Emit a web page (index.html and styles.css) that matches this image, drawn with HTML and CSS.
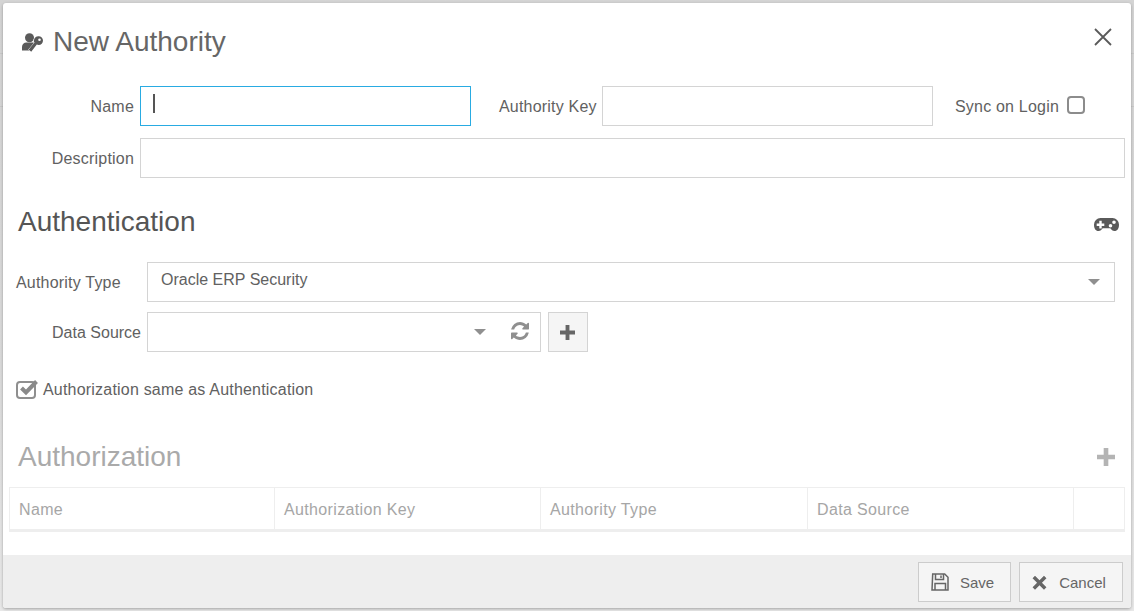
FILE: index.html
```html
<!DOCTYPE html>
<html lang="en">
<head>
    <meta charset="UTF-8">
    <meta name="viewport" content="width=device-width, initial-scale=1.0">
    <title>New Authority</title>
    <link rel="stylesheet" href="styles.css">
</head>
<body>

    <div class="modal">
        <!-- Header -->
        <div class="modal-header">
            <h1>
                <svg class="title-icon" viewBox="0 0 21 19" aria-hidden="true">
                    <circle cx="7.500" cy="4.800" r="4.500"/>
                    <path d="M0 17.500v-3.500c0-3 2-4.500 4.500-4.500h6.500l3 1-6 7z"/>
                    <path class="key" fill-rule="evenodd" d="M16.700 3.300a4.300 4.300 0 0 1 0 8.600c-.7 0-1.300-.1-1.900-.4L9.200 18.700 6.700 16.500l5.800-6.700a4.300 4.300 0 0 1 4.200-6.500zm.8 2.200a1.300 1.300 0 1 0 0 2.600 1.300 1.300 0 0 0 0-2.600z"/>
                </svg>
                New Authority
            </h1>
            <button type="button" class="close-btn" aria-label="Close">
                <svg viewBox="0 0 18 18" aria-hidden="true"><path d="M1 1l16 16M17 1L1 17"/></svg>
            </button>
        </div>

        <form class="modal-body">
            <!-- Name row -->
            <div class="form-row row-name">
                <label class="label label-main">Name</label>
                <div class="caret-wrap">
                    <input type="text" class="field field-focus">
                    <span class="caret"></span>
                </div>
                <label class="label label-key">Authority Key</label>
                <input type="text" class="field field-key">
                <label class="label label-sync">Sync on Login</label>
                <span class="checkbox"></span>
            </div>

            <div class="form-row row-desc">
                <label class="label label-main">Description</label>
                <input type="text" class="field field-grow">
            </div>

            <!-- Authentication -->
            <div class="section-head head-authn">
                <h2>Authentication</h2>
                <svg class="gamepad" viewBox="0 0 25 13" aria-hidden="true">
                    <path fill-rule="evenodd" d="M6.500 0h12a6.500 6.500 0 0 1 6.500 6.500c0 4-1.500 6.500-4.500 6.500-2 0-3-1.200-4.200-2.700H8.700C7.500 11.800 6.500 13 4.500 13 1.500 13 0 10.500 0 6.500A6.500 6.500 0 0 1 6.500 0zM5.300 2.800v2.700H2.700v2.400h2.600v2.600h2.400V7.900h2.600V5.500H7.700V2.800zM20 2.500a1.800 1.800 0 1 0 0 3.600 1.800 1.800 0 0 0 0-3.600zM16.500 6a1.800 1.800 0 1 0 0 3.600 1.800 1.800 0 0 0 0-3.600z"/>
                </svg>
            </div>

            <div class="form-row row-type">
                <label class="label label-type">Authority Type</label>
                <div class="select">
                    <span>Oracle ERP Security</span>
                    <i class="arrow"></i>
                </div>
            </div>

            <div class="form-row row-source">
                <label class="label label-source">Data Source</label>
                <div class="select select-source">
                    <i class="arrow"></i>
                    <svg class="refresh" viewBox="128 128 1536 1536" aria-hidden="true">
                        <path d="M1639 1056q0 5-1 7-64 268-268 434.500t-478 166.500q-146 0-282.500-55t-243.500-157l-129 129q-19 19-45 19t-45-19-19-45v-448q0-26 19-45t45-19h448q26 0 45 19t19 45-19 45l-137 137q71 66 161 102t187 36q134 0 250-65t186-179q11-17 53-117 8-23 30-23h192q13 0 22.500 9.500t9.500 22.500zm25-800v448q0 26-19 45t-45 19h-448q-26 0-45-19t-19-45 19-45l138-138q-148-137-349-137-134 0-250 65t-186 179q-11 17-53 117-8 23-30 23h-199q-13 0-22.500-9.500t-9.500-22.500v-7q65-268 270-434.500t480-166.500q146 0 284 55.500t245 156.500l130-129q19-19 45-19t45 19 19 45z"/>
                    </svg>
                </div>
                <button type="button" class="add-btn" aria-label="Add">
                    <svg viewBox="0 0 14 14" aria-hidden="true"><path d="M5.200 0h3.600v5.200H14v3.600H8.800V14H5.200V8.800H0V5.200h5.200z"/></svg>
                </button>
            </div>

            <div class="same-row">
                <svg class="check-icon" viewBox="0 0 23 20" aria-hidden="true">
                    <rect x="1" y="3" width="18" height="16" rx="3"/>
                    <path class="tick" d="M5.500 9l4.500 4.500L20.500 2.500"/>
                </svg>
                <label class="label">Authorization same as Authentication</label>
            </div>

            <!-- Authorization (disabled) -->
            <div class="section-head head-authz">
                <h2>Authorization</h2>
                <svg class="plus-muted" viewBox="0 0 14 14" aria-hidden="true"><path d="M5.200 0h3.600v5.200H14v3.600H8.800V14H5.200V8.800H0V5.200h5.200z"/></svg>
            </div>

            <div class="authz-table">
                <div class="cell">Name</div>
                <div class="cell">Authorization Key</div>
                <div class="cell">Authority Type</div>
                <div class="cell">Data Source</div>
                <div class="cell"></div>
            </div>
        </form>

        <!-- Footer -->
        <div class="modal-footer">
            <button type="button" class="btn btn-save">
                <svg viewBox="0 0 18 18" aria-hidden="true">
                    <path class="save-outline" d="M1.700 1h12l3.300 3.300v12.700H1z"/>
                    <path class="save-outline" d="M4.500 1v5.500h8V1M10 2.500v2.500M4 17v-6.500h10.500V17"/>
                </svg>
                Save
            </button>
            <button type="button" class="btn btn-cancel">
                <svg viewBox="0 0 16 16" aria-hidden="true"><path d="M3.200.8 8 5.600 12.800.8 15.400 3.400 10.600 8.200 15.400 13 12.800 15.600 8 10.800 3.200 15.600.6 13 5.400 8.200.6 3.400z"/></svg>
                Cancel
            </button>
        </div>
    </div>

</body>
</html>
```

FILE: styles.css
```css
* {
    box-sizing: border-box;
}

html, body {
    height: 100%;
}

body {
    margin: 0;
    overflow: hidden;
    font-family: "Liberation Sans", Arial, sans-serif;
    font-size: 16px;
    color: #555;
    /* page behind the dialog: two faint rules, then the overlay */
    background:
        linear-gradient(#c9c9c9, #c9c9c9) 0 53px / 100% 1px no-repeat,
        linear-gradient(#c9c9c9, #c9c9c9) 0 106px / 100% 1px no-repeat,
        linear-gradient(#d4d4d4, #dadada 60%, #e8e8e8);
}

.modal {
    margin: 3px 0 0 3px;
    width: 1128px;
    height: 605px;
    background-color: #fff;
    border-radius: 3px;
    box-shadow: 0 1px 3px rgba(0, 0, 0, 0.3);
    display: flex;
    flex-direction: column;
    overflow: hidden;
}

.modal-header {
    height: 83px;
    padding: 18px 19px 0 19px;
    display: flex;
    justify-content: space-between;
    align-items: flex-start;
    flex: none;
}

.modal-header h1 {
    margin: 0;
    display: flex;
    align-items: center;
    font-size: 28px;
    font-weight: 400;
    line-height: 42px;
    color: #666;
}

.title-icon {
    width: 21px;
    height: 19px;
    margin-right: 10px;
    fill: #5a5a5a;
}

.title-icon .key {
    stroke: #fff;
    stroke-width: 1;
    paint-order: stroke;
}

.close-btn {
    padding: 0;
    margin: 7px 0 0 0;
    border: none;
    background: none;
    width: 18px;
    height: 18px;
}

.close-btn svg {
    display: block;
    width: 18px;
    height: 18px;
    fill: none;
    stroke: #5a5a5a;
    stroke-width: 1.800;
}

.modal-body {
    flex: 1;
    display: flex;
    flex-direction: column;
}

.form-row {
    display: flex;
    align-items: center;
    height: 40px;
    flex: none;
}

.label {
    color: #616161;
    white-space: nowrap;
    letter-spacing: 0.2px;
    padding-top: 2px;
}

.field {
    height: 40px;
    border: 1px solid #d4d4d4;
    outline: none;
    background-color: #fff;
    display: block;
    padding: 0 12px;
}

.caret-wrap {
    position: relative;
    width: 331px;
}

.field-focus {
    width: 100%;
    border-color: #29abe2;
}

.caret {
    position: absolute;
    left: 13px;
    top: 8px;
    width: 2px;
    height: 19px;
    background-color: #555;
}

.label-main {
    width: 131px;
    margin-right: 6px;
    text-align: right;
}

.label-key {
    margin-left: 28px;
    width: 97px;
    margin-right: 6px;
}

.field-key {
    width: 331px;
}

.label-sync {
    margin-left: 22px;
    margin-right: 8px;
}

.checkbox {
    width: 18px;
    height: 18px;
    margin-top: -2px;
    border: 2px solid #8c8c8c;
    border-radius: 4px;
}

.row-desc {
    margin-top: 12px;
}

.field-grow {
    width: 985px;
}

.section-head {
    display: flex;
    justify-content: space-between;
    align-items: center;
    flex: none;
}

.section-head h2 {
    margin: 0;
    font-size: 28px;
    font-weight: 400;
    line-height: 40px;
}

.head-authn {
    margin-top: 24px;
    padding: 0 12px 0 15px;
    color: #555;
}

.gamepad {
    width: 25px;
    height: 13px;
    fill: #5a5a5a;
    margin-top: 5px;
}

.row-type {
    margin-top: 20px;
    padding-left: 13px;
}

.label-type {
    width: 131px;
}

.select {
    position: relative;
    width: 968px;
    height: 40px;
    border: 1px solid #d4d4d4;
    padding: 0 13px 4px 13px;
    display: flex;
    align-items: center;
    color: #616161;
    line-height: 34px;
}

.arrow {
    position: absolute;
    right: 14px;
    top: 16px;
    width: 0;
    height: 0;
    border-left: 6px solid transparent;
    border-right: 6px solid transparent;
    border-top: 6px solid #8f8f8f;
}

.row-source {
    margin-top: 10px;
}

.label-source {
    width: 138px;
    margin-right: 6px;
    text-align: right;
    letter-spacing: 0;
}

.select-source {
    width: 394px;
}

.select-source .arrow {
    right: 54px;
}

.refresh {
    position: absolute;
    right: 11px;
    top: 9px;
    width: 18px;
    height: 18px;
    fill: #8f8f8f;
}

.add-btn {
    margin-left: 7px;
    width: 40px;
    height: 40px;
    padding: 0 2px 0 0;
    border: 1px solid #d4d4d4;
    background-color: #f5f5f5;
    display: flex;
    align-items: center;
    justify-content: center;
}

.add-btn svg {
    width: 15px;
    height: 15px;
    fill: #666;
}

.same-row {
    margin-top: 26px;
    padding-left: 13px;
    display: flex;
    align-items: center;
    height: 24px;
    flex: none;
}

.check-icon {
    width: 23px;
    height: 20px;
    margin-right: 4px;
    margin-top: -2px;
}

.check-icon rect {
    fill: none;
    stroke: #8f8f8f;
    stroke-width: 2;
}

.check-icon .tick {
    fill: none;
    stroke: #8a8a8a;
    stroke-width: 4;
}

.same-row .label {
    padding-top: 0;
    letter-spacing: 0.2px;
}

.head-authz {
    margin-top: 35px;
    padding: 0 16px 0 15px;
    color: #aaa;
}

.plus-muted {
    width: 18px;
    height: 18px;
    fill: #b4b4b4;
}

.authz-table {
    margin: 10px 0 0 6px;
    width: 1116px;
    height: 45px;
    display: grid;
    grid-template-columns: 265px 266px 267px 266px 1fr;
    border: 1px solid #eee;
    border-bottom-width: 3px;
    flex: none;
}

.cell {
    padding-left: 9px;
    border-right: 1px solid #eee;
    color: #a6a6a6;
    line-height: 44px;
    font-size: 16px;
    letter-spacing: 0.35px;
}

.cell:last-child {
    border-right: none;
}

.modal-footer {
    height: 53px;
    flex: none;
    background-color: #eee;
    display: flex;
    justify-content: flex-end;
    gap: 8px;
    padding: 7px 8px 0 0;
}

.btn {
    height: 40px;
    border: 1px solid #ccc;
    background-color: #f5f5f5;
    color: #666;
    font-family: inherit;
    font-size: 15px;
    font-weight: 400;
    display: flex;
    align-items: center;
    justify-content: center;
    padding: 0 4px 0 0;
}

.btn-save {
    width: 93px;
    gap: 11px;
}

.btn-save svg {
    width: 18px;
    height: 18px;
}

.save-outline {
    fill: none;
    stroke: #666;
    stroke-width: 1.500;
}

.btn-cancel {
    width: 104px;
    gap: 12px;
}

.btn-cancel svg {
    width: 15px;
    height: 15px;
    fill: #666;
}
```
